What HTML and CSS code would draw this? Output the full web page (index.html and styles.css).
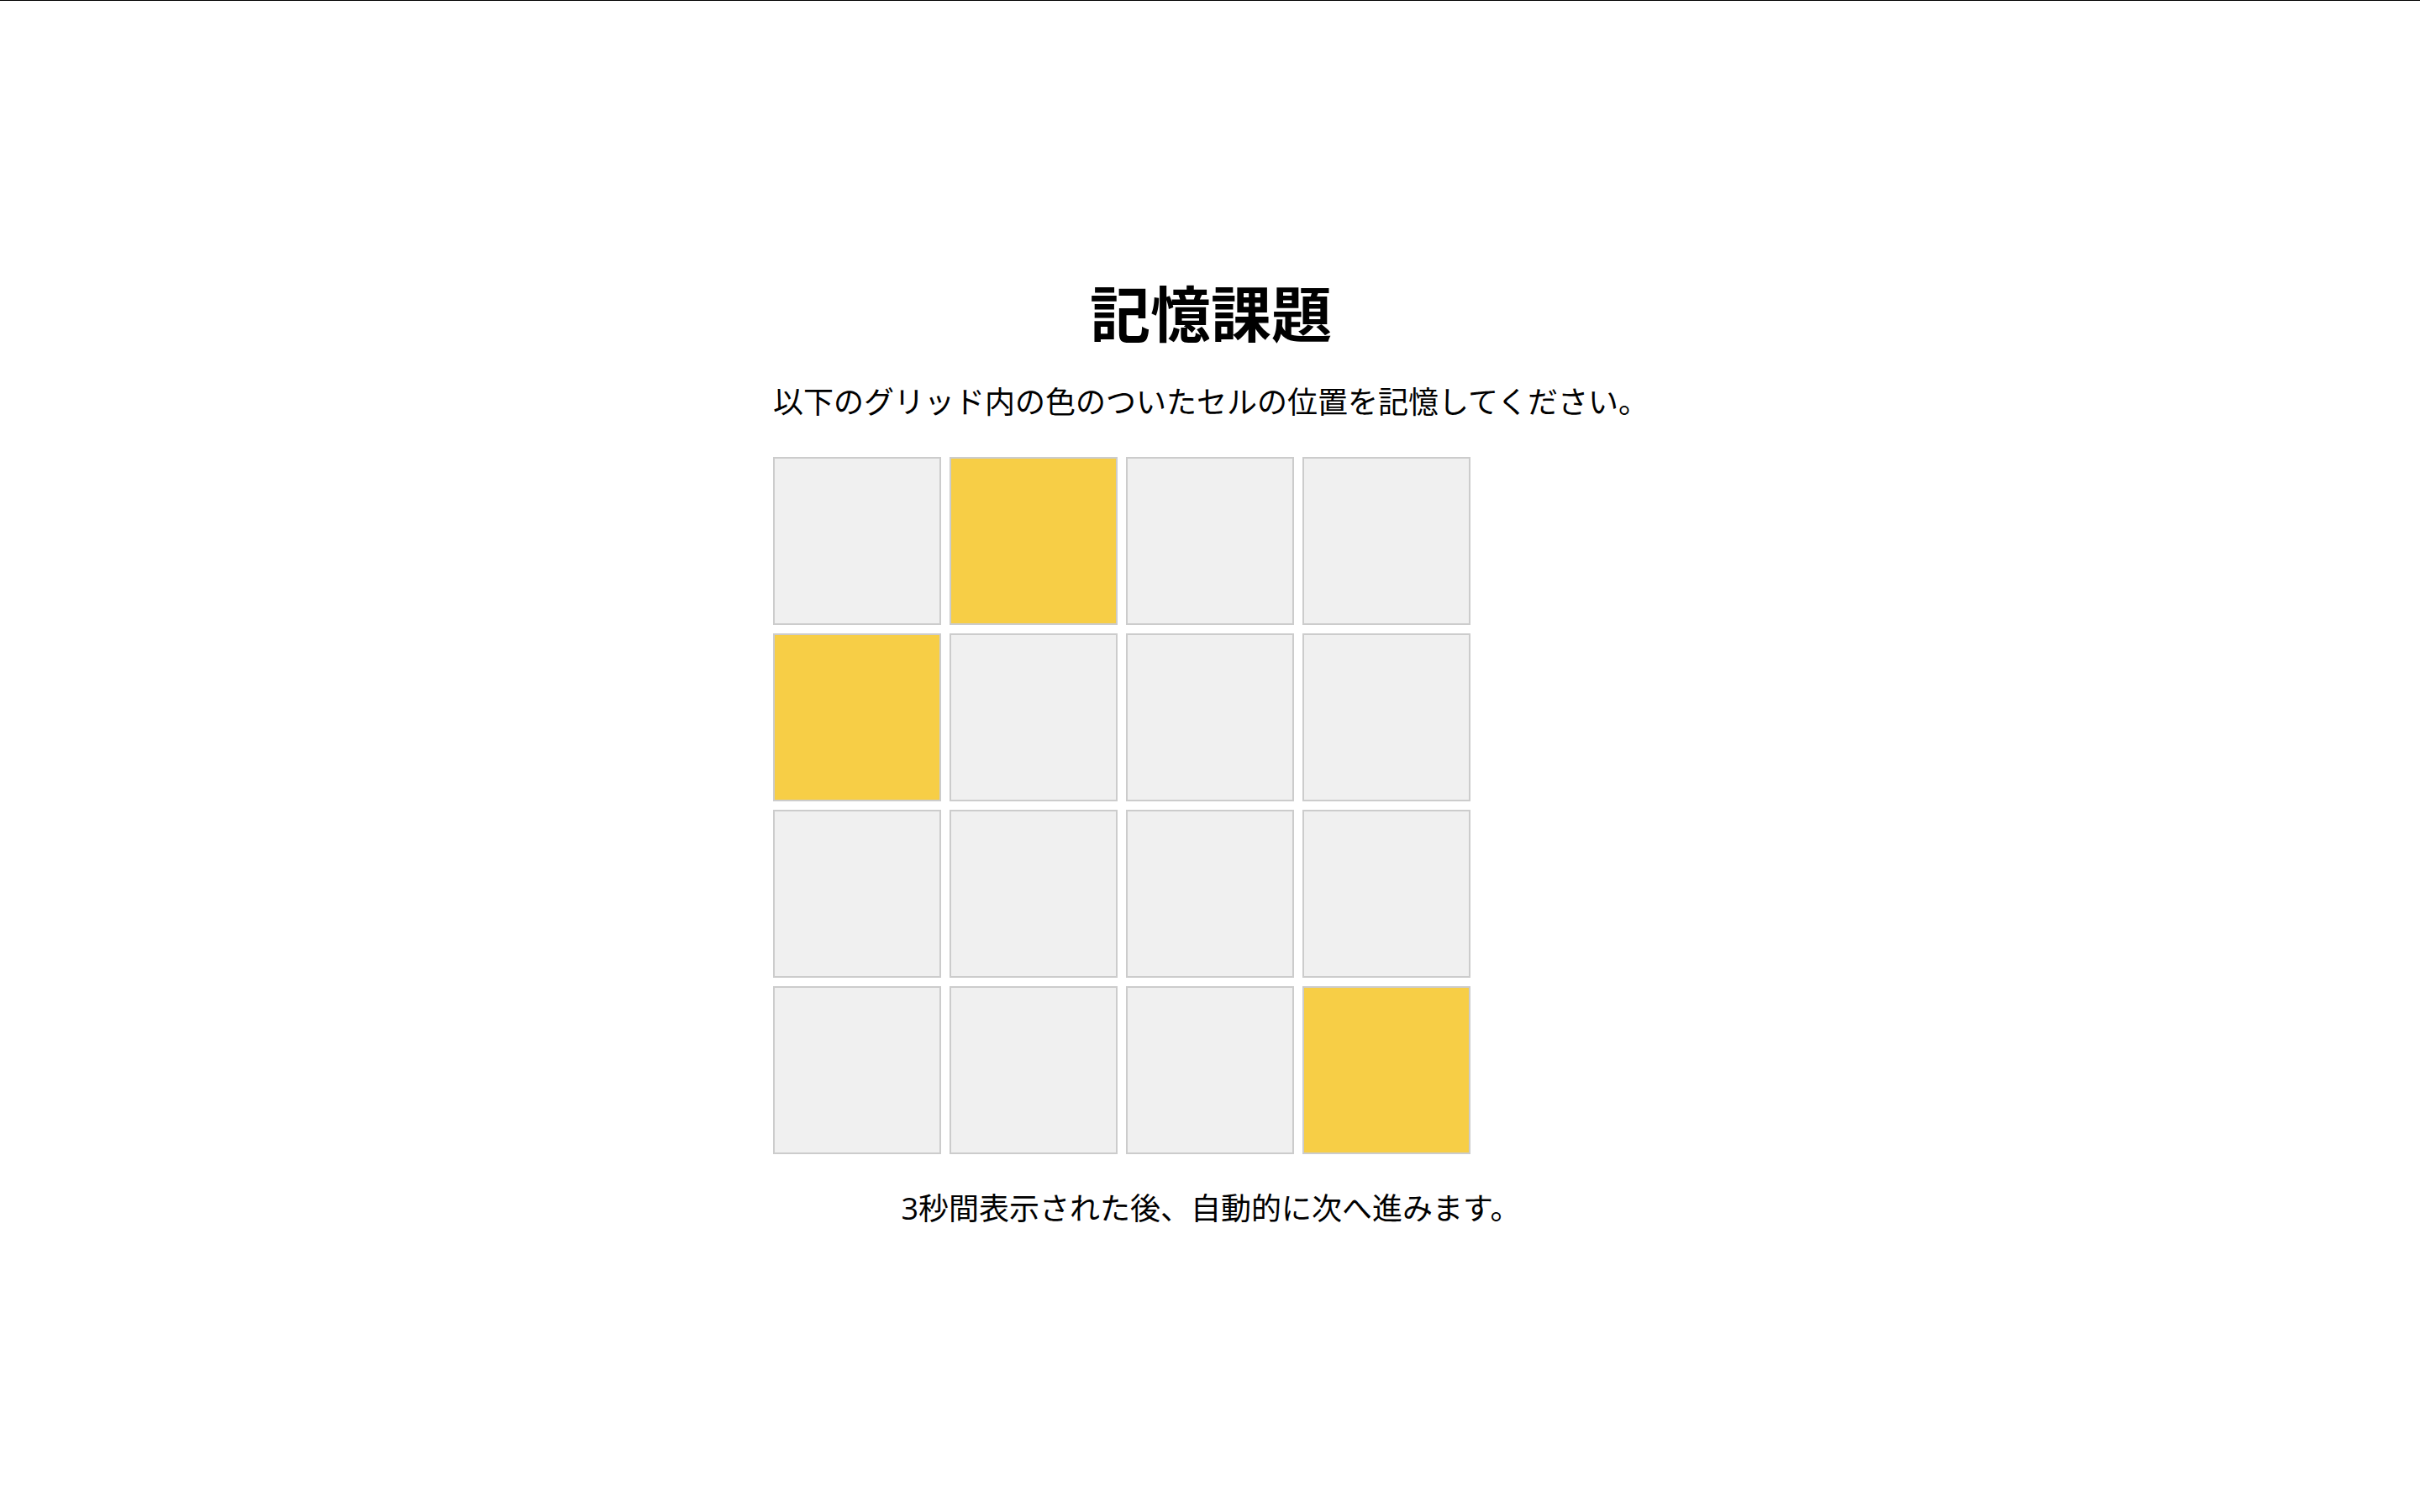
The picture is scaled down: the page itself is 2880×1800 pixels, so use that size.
FILE: index.html
```html
<!DOCTYPE html>
<html lang="ja">
<head>
<meta charset="utf-8">
<title>記憶課題</title>
<link rel="stylesheet" href="styles.css">
</head>
<body>
<main class="task">
<div class="content">
<h1 class="title">記憶課題</h1>
<p class="text">以下のグリッド内の色のついたセルの位置を記憶してください。</p>
<div class="grid">
<div class="cell"></div><div class="cell marked"></div><div class="cell"></div><div class="cell"></div>
<div class="cell marked"></div><div class="cell"></div><div class="cell"></div><div class="cell"></div>
<div class="cell"></div><div class="cell"></div><div class="cell"></div><div class="cell"></div>
<div class="cell"></div><div class="cell"></div><div class="cell"></div><div class="cell marked"></div>
</div>
<p class="text">3秒間表示された後、自動的に次へ進みます。</p>
</div>
</main>
</body>
</html>
```
FILE: styles.css
```css
* { box-sizing: border-box; }
body {
  margin: 0;
  background: #fff;
  color: #000;
  font-family: "Open Sans", "Noto Sans CJK JP", sans-serif;
}
.task {
  min-height: 100vh;
  display: flex;
  align-items: center;
  justify-content: center;
  padding: 0 0 2px 2px;
  border-top: 1px solid #000;
}
.content { text-align: center; }
.title { margin: 0 0 40px; font-size: 72px; line-height: 78px; font-weight: 700; }
.text { margin: 0; font-size: 36px; line-height: 54px; }
.grid {
  display: grid;
  grid-template-columns: repeat(4, 200px);
  grid-auto-rows: 200px;
  gap: 10px;
  margin: 38px 0;
}
.cell { background: #f0f0f0; border: 2px solid #ccc; }
.marked { background: #f7ce46; }
```
